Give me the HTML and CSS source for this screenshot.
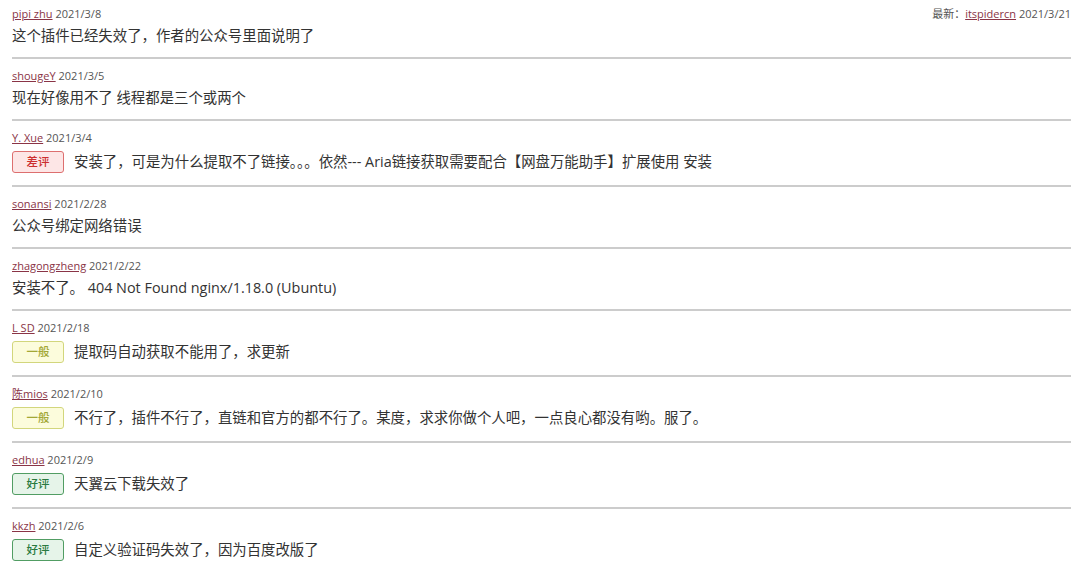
FILE: index.html
```html
<!DOCTYPE html>
<html lang="zh-CN">
<head>
    <meta charset="UTF-8">
    <title>评论</title>
    <link rel="stylesheet" href="styles.css">
</head>
<body>
    <div class="list">
        <div class="item">
            <div class="meta">
                <span><a href="#">pipi zhu</a> 2021/3/8</span>
                <span class="latest">最新：<a href="#">itspidercn</a> 2021/3/21</span>
            </div>
            <div class="content">这个插件已经失效了，作者的公众号里面说明了</div>
        </div>
        <div class="item">
            <div class="meta"><span><a href="#">shougeY</a> 2021/3/5</span></div>
            <div class="content">现在好像用不了 线程都是三个或两个</div>
        </div>
        <div class="item">
            <div class="meta"><span><a href="#">Y. Xue</a> 2021/3/4</span></div>
            <div class="content"><span class="badge bad">差评</span>安装了，可是为什么提取不了链接。。。依然--- Aria链接获取需要配合【网盘万能助手】扩展使用 安装</div>
        </div>
        <div class="item">
            <div class="meta"><span><a href="#">sonansi</a> 2021/2/28</span></div>
            <div class="content">公众号绑定网络错误</div>
        </div>
        <div class="item">
            <div class="meta"><span><a href="#">zhagongzheng</a> 2021/2/22</span></div>
            <div class="content">安装不了。 404 Not Found nginx/1.18.0 (Ubuntu)</div>
        </div>
        <div class="item">
            <div class="meta"><span><a href="#">L SD</a> 2021/2/18</span></div>
            <div class="content"><span class="badge mid">一般</span>提取码自动获取不能用了，求更新</div>
        </div>
        <div class="item">
            <div class="meta"><span><a href="#">陈mios</a> 2021/2/10</span></div>
            <div class="content"><span class="badge mid">一般</span>不行了，插件不行了，直链和官方的都不行了。某度，求求你做个人吧，一点良心都没有哟。服了。</div>
        </div>
        <div class="item">
            <div class="meta"><span><a href="#">edhua</a> 2021/2/9</span></div>
            <div class="content"><span class="badge good">好评</span>天翼云下载失效了</div>
        </div>
        <div class="item">
            <div class="meta"><span><a href="#">kkzh</a> 2021/2/6</span></div>
            <div class="content"><span class="badge good">好评</span>自定义验证码失效了，因为百度改版了</div>
        </div>
    </div>
</body>
</html>
```

FILE: styles.css
```css
body {
    margin: 0;
    background: #ffffff;
    font-family: "Open Sans", "Noto Sans CJK SC", sans-serif;
    color: #333333;
    overflow: hidden;
}

.list {
    padding: 0 9px 0 12px;
}

.item {
    padding: 9px 0 10px;
    border-bottom: 2px solid #cccccc;
}

.item:first-child {
    padding-top: 6px;
}

.meta {
    display: flex;
    justify-content: space-between;
    font-size: 11px;
    line-height: 16px;
    color: #555555;
}

.meta a {
    color: #8a3446;
    text-decoration: underline;
}

.content {
    display: flex;
    align-items: center;
    margin-top: 3px;
    min-height: 22px;
    font-size: 14.4px;
    line-height: 22px;
    color: #333333;
}

.badge {
    box-sizing: border-box;
    width: 52px;
    height: 22px;
    margin: 2px 10px 2px 0;
    border: 1.5px solid;
    border-radius: 3px;
    font-size: 11.5px;
    font-weight: 500;
    line-height: 19px;
    text-align: center;
    flex-shrink: 0;
}

.bad {
    color: #cc2f2f;
    background: #fde6e6;
    border-color: #dd6f6f;
}

.mid {
    color: #a3a736;
    background: #fcfcdc;
    border-color: #d2d67c;
}

.good {
    color: #2a7a40;
    background: #e6f4e9;
    border-color: #519d63;
}
```
